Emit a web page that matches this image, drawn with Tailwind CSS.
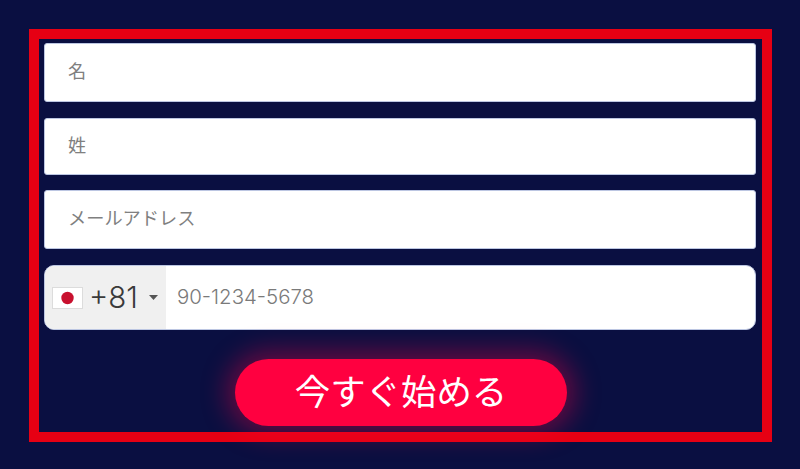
<!DOCTYPE html>
<html lang="ja">
<head>
<meta charset="utf-8">
<title>今すぐ始める</title>
<script src="https://cdn.jsdelivr.net/npm/@tailwindcss/browser@4"></script>
</head>
<body class="m-0 bg-[#0a0f41]">
<div class="w-[800px] h-[469px] overflow-hidden bg-[#0a0f41] pt-[29px] pl-[29px] font-['Noto_Sans_CJK_JP','Noto_Sans',sans-serif]">
  <form class="w-[743px] h-[413px] border-[10px] border-[#e60013] pt-[4px] pl-[5px] pr-[6px] flex flex-col">
    <div class="h-[59px] shrink-0 bg-white border border-[#bcc6e2] rounded-[3px] pl-[23px] pb-[4px] flex items-center text-[18.2px] text-[#808080] leading-none">名</div>
    <div class="h-[57px] mt-[16px] shrink-0 bg-white border border-[#bcc6e2] rounded-[3px] pl-[23px] pb-[4px] flex items-center text-[18.2px] text-[#808080] leading-none">姓</div>
    <div class="h-[59px] mt-[15px] shrink-0 bg-white border border-[#bcc6e2] rounded-[3px] pl-[23px] pb-[4px] flex items-center text-[18.2px] text-[#808080] leading-none">メールアドレス</div>
    <div class="h-[65px] mt-[16px] shrink-0 bg-white border border-[#bcc6e2] rounded-[10px] overflow-hidden flex items-stretch">
      <div class="w-[121px] bg-[#f0f0f0] flex items-center pl-[7px] shrink-0">
        <svg class="w-[31px] h-[22px] shrink-0" viewBox="0 0 31 22"><rect x="0.5" y="0.5" width="30" height="21" fill="#fff" stroke="#dcdcdc"/><circle cx="15.5" cy="11" r="6.2" fill="#c8102e"/></svg>
        <span class="ml-[6px] text-[29.5px] leading-none text-[#3a3a3a] font-['Inter',sans-serif] font-light">+81</span>
        <svg class="ml-[11px] w-[9px] h-[5px] shrink-0" viewBox="0 0 9 5"><path d="M0 0H9L4.5 5Z" fill="#555"/></svg>
      </div>
      <div class="pl-[11px] flex items-center text-[20.4px] leading-none text-[#7a7a7a] font-['Inter',sans-serif] font-light">90-1234-5678</div>
    </div>
    <div class="mt-[29px] flex justify-center pl-[2px]">
      <button type="button" class="w-[332px] h-[67px] rounded-full bg-[#ff0040] text-white text-[35.4px] leading-none pb-[6px] shadow-[0_0_26px_8px_rgba(255,0,64,0.38)] flex items-center justify-center">今すぐ始める</button>
    </div>
  </form>
</div>
</body>
</html>
